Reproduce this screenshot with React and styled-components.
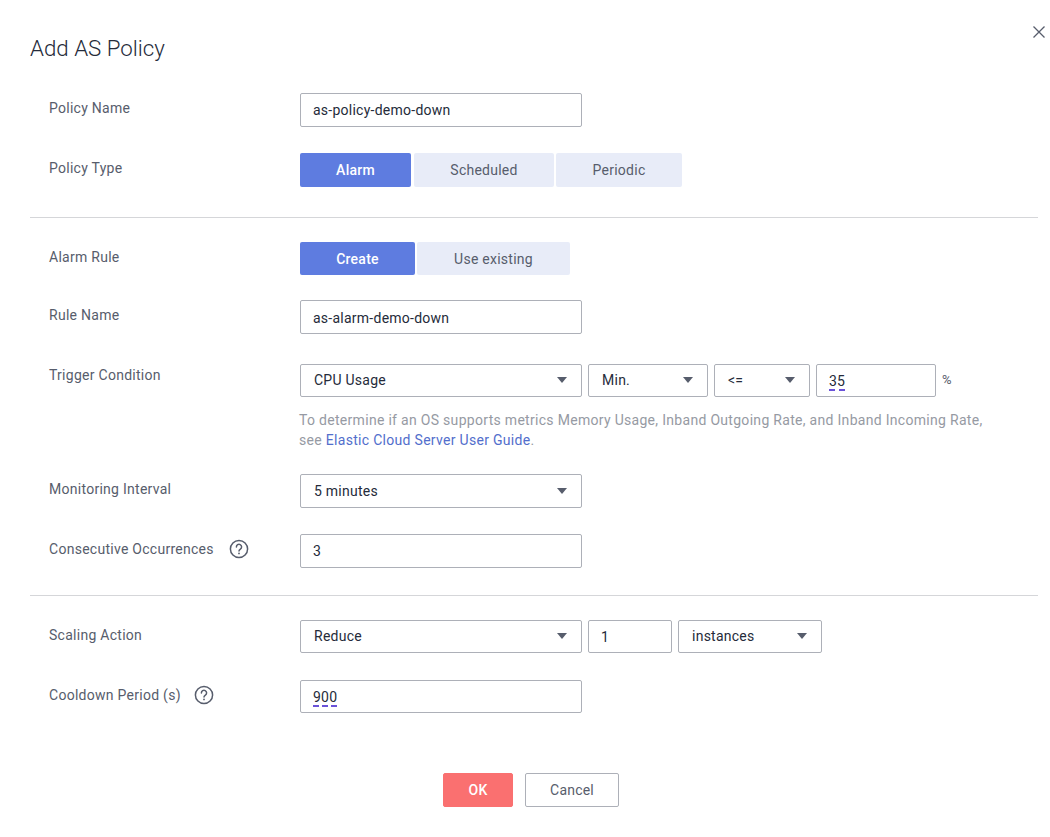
import React from "react";
import styled, { createGlobalStyle } from "styled-components";

const GlobalStyle = createGlobalStyle`
  html, body {
    margin: 0;
    padding: 0;
    background: #fff;
    font-family: Roboto, "Liberation Sans", sans-serif;
  }
`;

const Dialog = styled.div`
  position: relative;
  width: 1050px;
  height: 837px;
  box-sizing: border-box;
  padding: 35px 12px 0 30px;
  overflow: hidden;
  background: #fff;
`;

const CloseButton = styled.button`
  position: absolute;
  top: 25px;
  right: 4px;
  width: 14px;
  height: 14px;
  padding: 0;
  border: 0;
  background: none;
  display: flex;
`;

const Title = styled.h1`
  margin: 0 0 31px;
  font-size: 22.3px;
  line-height: 27px;
  font-weight: 300;
  color: #252b3a;
`;

const Section = styled.section`
  display: flex;
  flex-direction: column;
`;

const Divider = styled.hr`
  margin: ${(p) => p.$top}px 0 ${(p) => p.$bottom}px;
  border: 0;
  border-top: 1px solid #d5d6d9;
`;

const Row = styled.div`
  display: flex;
  align-items: flex-start;
  margin-bottom: ${(p) => p.$space || 0}px;
`;

const Label = styled.div`
  width: 270px;
  box-sizing: border-box;
  padding-left: 19px;
  display: flex;
  align-items: center;
  height: ${(p) => p.$height || 30}px;
  font-size: 14px;
  letter-spacing: 0.27px;
  color: #575d6c;
`;

const Help = styled.svg`
  margin-left: ${(p) => p.$gap}px;
  flex: none;
`;

const Control = styled.div`
  flex: 1;
  min-width: 0;
`;

const Inline = styled.div`
  display: flex;
  gap: 6px;
`;

const Field = styled.div`
  box-sizing: border-box;
  width: ${(p) => p.$width}px;
  height: ${(p) => p.$height || 34}px;
  padding: ${(p) => p.$nudge || 0}px 12px 0;
  display: flex;
  align-items: center;
  justify-content: space-between;
  border: 1px solid #adb0b8;
  border-radius: 2px;
  background: #fff;
  font-size: 14px;
  letter-spacing: 0.25px;
  color: #252b3a;
`;

const SelectField = styled(Field)`
  padding: 0 14px ${(p) => (p.$height === 33 ? 1 : 0)}px 13px;
`;

const Arrow = styled.span`
  width: 0;
  height: 0;
  border-left: 5px solid transparent;
  border-right: 5px solid transparent;
  border-top: 6px solid #575d6c;
`;

const Spell = styled.span`
  border-bottom: 2px dashed #6a52d8;
  line-height: 16px;
  margin-top: 2px;
`;

const Unit = styled.span`
  align-self: flex-start;
  margin-top: 8px;
  font-size: 13px;
  color: #575d6c;
`;

const Tabs = styled.div`
  display: flex;
  gap: 2px;
`;

const Tab = styled.div`
  width: ${(p) => p.$width}px;
  height: ${(p) => p.$height}px;
  margin-right: ${(p) => p.$after || 0}px;
  display: flex;
  align-items: center;
  justify-content: center;
  border-radius: 2px;
  font-size: 14px;
  letter-spacing: 0.25px;
  font-weight: ${(p) => (p.$active ? 500 : 400)};
  color: ${(p) => (p.$active ? "#fff" : "#575d6c")};
  background: ${(p) => (p.$active ? "#5e7ce0" : "#e8ecf8")};
`;

const Hint = styled.p`
  margin: 13px 0 0 -1px;
  width: 690px;
  font-size: 14px;
  line-height: 20px;
  letter-spacing: 0.3px;
  color: #969aa3;
`;

const DocLink = styled.a`
  color: #526ecc;
  text-decoration: none;
`;

const Footer = styled.div`
  margin-top: 60px;
  margin-right: 6px;
  display: flex;
  justify-content: center;
  gap: 12px;
`;

const Button = styled.button`
  box-sizing: border-box;
  width: ${(p) => p.$width}px;
  height: 34px;
  padding: 0;
  border: 1px solid ${(p) => (p.$primary ? "#fa7070" : "#adb0b8")};
  border-radius: 2px;
  background: ${(p) => (p.$primary ? "#fa7070" : "#fff")};
  color: ${(p) => (p.$primary ? "#fff" : "#575d6c")};
  font-family: inherit;
  font-size: 14px;
  letter-spacing: 0.2px;
  font-weight: ${(p) => (p.$primary ? 500 : 400)};
`;

const HelpIcon = ({ gap }) => (
  <Help $gap={gap} width="20" height="20" viewBox="0 0 20 20" fill="none">
    <circle cx="10" cy="10" r="8.6" stroke="#575d6c" strokeWidth="1.5" />
    <path
      d="M7.4 8a2.6 2.6 0 1 1 4 2.1c-.9.6-1.4 1-1.4 2"
      stroke="#575d6c"
      strokeWidth="1.5"
      strokeLinecap="round"
    />
    <circle cx="10" cy="14.4" r="0.9" fill="#575d6c" />
  </Help>
);

const Select = ({ width, height, children }) => (
  <SelectField $width={width} $height={height}>
    {children}
    <Arrow />
  </SelectField>
);

const App = () => {
  return (
    <Dialog>
      <GlobalStyle />
      <CloseButton aria-label="Close">
        <svg width="14" height="14" viewBox="0 0 14 14" fill="none">
          <path d="M1.5 1.5l11 11M12.5 1.5l-11 11" stroke="#575d6c" strokeWidth="1.3" />
        </svg>
      </CloseButton>
      <Title>Add AS Policy</Title>

      <Section>
        <Row $space={26}>
          <Label>Policy Name</Label>
          <Control>
            <Field $width={282}>as-policy-demo-down</Field>
          </Control>
        </Row>
        <Row>
          <Label>Policy Type</Label>
          <Tabs>
            <Tab $active $width={111} $height={34} $after={1}>Alarm</Tab>
            <Tab $width={140} $height={34}>Scheduled</Tab>
            <Tab $width={126} $height={34}>Periodic</Tab>
          </Tabs>
        </Row>
      </Section>

      <Divider $top={30} $bottom={24} />

      <Section>
        <Row $space={25}>
          <Label>Alarm Rule</Label>
          <Tabs>
            <Tab $active $width={115} $height={33}>Create</Tab>
            <Tab $width={153} $height={33}>Use existing</Tab>
          </Tabs>
        </Row>
        <Row $space={30}>
          <Label>Rule Name</Label>
          <Control>
            <Field $width={282} $nudge={1}>as-alarm-demo-down</Field>
          </Control>
        </Row>
        <Row $space={24}>
          <Label $height={22}>Trigger Condition</Label>
          <Control>
            <Inline>
              <Select width={282} height={33}>CPU Usage</Select>
              <Select width={120} height={33}>Min.</Select>
              <Select width={96} height={33}>&lt;=</Select>
              <Field $width={120} $height={33}><Spell>35</Spell></Field>
              <Unit>%</Unit>
            </Inline>
            <Hint>
              To determine if an OS supports metrics Memory Usage, Inband Outgoing Rate, and Inband
              Incoming Rate, see <DocLink href="#">Elastic Cloud Server User Guide</DocLink>.
            </Hint>
          </Control>
        </Row>
        <Row $space={26}>
          <Label>Monitoring Interval</Label>
          <Control>
            <Select width={282}>5 minutes</Select>
          </Control>
        </Row>
        <Row>
          <Label>
            Consecutive Occurrences
            <HelpIcon gap={15} />
          </Label>
          <Control>
            <Field $width={282}>3</Field>
          </Control>
        </Row>
      </Section>

      <Divider $top={27} $bottom={24} />

      <Section>
        <Row $space={27}>
          <Label>Scaling Action</Label>
          <Inline>
            <Select width={282} height={33}>Reduce</Select>
            <Field $width={84} $height={33}>1</Field>
            <Select width={144} height={33}>instances</Select>
          </Inline>
        </Row>
        <Row>
          <Label>
            Cooldown Period (s)
            <HelpIcon gap={13} />
          </Label>
          <Control>
            <Field $width={282} $height={33}><Spell>900</Spell></Field>
          </Control>
        </Row>
      </Section>

      <Footer>
        <Button $primary $width={70}>OK</Button>
        <Button $width={94}>Cancel</Button>
      </Footer>
    </Dialog>
  );
};

export default App;
